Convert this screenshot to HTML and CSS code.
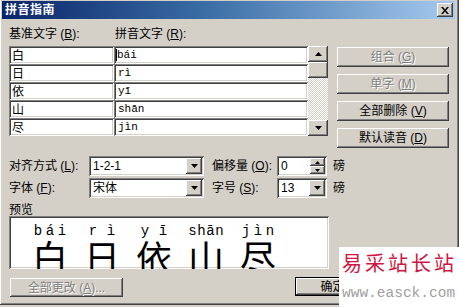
FILE: index.html
```html
<!DOCTYPE html>
<html lang="zh-CN">
<head>
<meta charset="utf-8">
<title>拼音指南</title>
<link rel="stylesheet" href="styles.css">
</head>
<body>
<div class="window">
  <div class="titlebar">
    <span class="title">拼音指南</span>
    <span class="close raised"><svg width="8" height="7" viewBox="0 0 8 7"><path d="M0 0h2l2 2.4 2-2.4h2l-3 3.5 3 3.5h-2l-2-2.4-2 2.4h-2l3-3.5z" fill="#000"/></svg></span>
  </div>
  <div class="body">
    <div class="colheads">
      <span class="lbl head1">基准文字 (<u>B</u>):</span>
      <span class="lbl">拼音文字 (<u>R</u>):</span>
    </div>
    <div class="main">
      <div class="grid">
        <div class="cell">白</div><div class="cell py"><span class="caret"></span>bái</div>
        <div class="cell">日</div><div class="cell py">rì</div>
        <div class="cell">依</div><div class="cell py">yī</div>
        <div class="cell">山</div><div class="cell py">shān</div>
        <div class="cell">尽</div><div class="cell py">jìn</div>
      </div>
      <div class="vscroll">
        <span class="sbtn raised"><svg width="7" height="4" viewBox="0 0 7 4"><path d="M3.5 0L7 4H0z" fill="#000"/></svg></span>
        <span class="thumb raised"></span>
        <span class="track"></span>
        <span class="sbtn raised"><svg width="7" height="4" viewBox="0 0 7 4"><path d="M0 0h7L3.5 4z" fill="#000"/></svg></span>
      </div>
      <div class="btncol">
        <span class="btn raised disabled">组合 (<u>G</u>)</span>
        <span class="btn raised disabled">单字 (<u>M</u>)</span>
        <span class="btn raised">全部删除 (<u>V</u>)</span>
        <span class="btn raised">默认读音 (<u>D</u>)</span>
      </div>
    </div>
    <div class="opts">
      <span class="lbl">对齐方式 (<u>L</u>):</span>
      <div class="combo wide sunken"><span class="val">1-2-1</span><span class="drop raised"><svg width="7" height="4" viewBox="0 0 7 4"><path d="M0 0h7L3.5 4z" fill="#000"/></svg></span></div>
      <span class="lbl">偏移量 (<u>O</u>):</span>
      <div class="combo narrow sunken"><span class="val">0</span><span class="spin"><span class="sb raised"><svg width="5" height="3" viewBox="0 0 5 3"><path d="M2.5 0L5 3H0z" fill="#000"/></svg></span><span class="sb raised"><svg width="5" height="3" viewBox="0 0 5 3"><path d="M0 0h5L2.5 3z" fill="#000"/></svg></span></span></div>
      <span class="unit">磅</span>
      <span class="lbl">字体 (<u>F</u>):</span>
      <div class="combo wide sunken"><span class="val">宋体</span><span class="drop raised"><svg width="7" height="4" viewBox="0 0 7 4"><path d="M0 0h7L3.5 4z" fill="#000"/></svg></span></div>
      <span class="lbl">字号 (<u>S</u>):</span>
      <div class="combo narrow sunken"><span class="val">13</span><span class="drop raised"><svg width="7" height="4" viewBox="0 0 7 4"><path d="M0 0h7L3.5 4z" fill="#000"/></svg></span></div>
      <span class="unit">磅</span>
    </div>
    <div class="plabel">预览</div>
    <div class="preview sunken">
      <div class="rcol"><div class="pys"><span>b</span><span>á</span><span>i</span></div><div class="hz">白</div></div>
      <div class="rcol"><div class="pys"><span>r</span><span>ì</span></div><div class="hz">日</div></div>
      <div class="rcol"><div class="pys"><span>y</span><span>ī</span></div><div class="hz">依</div></div>
      <div class="rcol"><div class="pys"><span>s</span><span>h</span><span>ā</span><span>n</span></div><div class="hz">山</div></div>
      <div class="rcol"><div class="pys"><span>j</span><span>ì</span><span>n</span></div><div class="hz">尽</div></div>
    </div>
    <div class="footer">
      <span class="btn raised disabled allchg">全部更改 (<u>A</u>)...</span>
      <span class="btn raised default ok">确定</span>
    </div>
  </div>
  <div class="watermark">
    <div class="wm-cn">易采站长站</div>
    <div class="wm-url">www.easck.com</div>
  </div>
</div>
</body>
</html>
```

FILE: styles.css
```css
* { box-sizing: border-box; }
html, body { margin: 0; padding: 0; }
body {
  width: 459px;
  height: 307px;
  overflow: hidden;
  background: #d4d0c8;
  font: 12px "Liberation Sans", "Noto Sans CJK SC", sans-serif;
  color: #000;
}
u { text-decoration: underline; text-underline-offset: 1px; }

.window {
  position: relative;
  width: 459px;
  height: 305px;
  padding: 1px 3px 0 2px;
  background: #d4d0c8;
  border-bottom: 1px solid #404040;
  border-right: 1px solid #404040;
  box-shadow: inset 1px 0 #fff, inset -1px -1px #808080;
}

.raised {
  background: #d4d0c8;
  box-shadow: inset -1px -1px #404040, inset 1px 1px #fff, inset -2px -2px #808080, inset 2px 2px #d4d0c8;
}
.sunken {
  background: #fff;
  box-shadow: inset 1px 1px #808080, inset -1px -1px #fff, inset 2px 2px #404040, inset -2px -2px #d4d0c8;
}

.titlebar {
  height: 18px;
  display: flex;
  align-items: center;
  justify-content: space-between;
  background: linear-gradient(to right, #0a246a, #3a6ea5 45%, #a6caf0);
}
.title {
  padding-left: 3px;
  color: #fff;
  font-weight: bold;
  font-size: 12px;
  letter-spacing: 0.5px;
  line-height: 14px;
}
.close {
  width: 16px;
  height: 14px;
  margin-right: 2px;
  display: flex;
  align-items: center;
  justify-content: center;
}

.body { padding-left: 7px; }

.lbl, .unit { line-height: 14px; white-space: nowrap; }

.colheads {
  display: flex;
  height: 14px;
  margin-top: 8px;
}
.head1 { width: 106px; }

.main {
  display: flex;
  align-items: flex-start;
  margin-top: 5px;
}
.grid {
  display: grid;
  grid-template-columns: 105px 194px;
  grid-auto-rows: 18px;
}
.cell {
  background: #fff;
  box-shadow: inset 1px 1px #808080, inset -1px -1px #fff, inset 2px 2px #404040, inset -2px -2px #d4d0c8;
  padding: 2px 0 0 3px;
  line-height: 14px;
  font-size: 12px;
  font-family: "Noto Sans CJK SC", sans-serif;
}
.cell.py {
  font-family: "Liberation Mono", monospace;
  font-size: 11px;
  padding-left: 4px;
  display: flex;
  align-items: center;
  padding-top: 0;
}
.caret {
  display: inline-block;
  width: 1px;
  height: 12px;
  background: #000;
  margin-left: -2px;
}

.vscroll {
  width: 20px;
  height: 90px;
  display: flex;
  flex-direction: column;
}
.sbtn {
  height: 16px;
  display: flex;
  align-items: center;
  justify-content: center;
}
.thumb { height: 16px; }
.track {
  flex: 1;
  background-color: #fff;
  background-image: repeating-conic-gradient(#d4d0c8 0 25%, #fff 0 50%);
  background-size: 2px 2px;
}

.btncol {
  display: flex;
  flex-direction: column;
  gap: 7px;
  margin: 1px 0 0 9px;
}
.btn {
  width: 112px;
  height: 20px;
  display: flex;
  align-items: center;
  justify-content: center;
  line-height: 14px;
  white-space: nowrap;
}
.btn.disabled { color: #808080; text-shadow: 1px 1px #fff; }

.opts {
  display: grid;
  grid-template-columns: 80px 123px 65px 56px auto;
  grid-template-rows: 20px 20px;
  row-gap: 2px;
  align-items: center;
  margin-top: 8px;
}
.combo {
  height: 20px;
  display: flex;
  align-items: center;
  padding: 2px;
}
.combo.wide { width: 115px; }
.combo.narrow { width: 50px; }
.val {
  flex: 1;
  padding-left: 2px;
  line-height: 14px;
}
.drop {
  width: 16px;
  height: 16px;
  display: flex;
  align-items: center;
  justify-content: center;
}
.spin {
  width: 15px;
  height: 16px;
  display: flex;
  flex-direction: column;
}
.sb {
  flex: 1;
  display: flex;
  align-items: center;
  justify-content: center;
}

.plabel {
  height: 13px;
  line-height: 14px;
  margin-top: 5px;
}

.preview {
  width: 320px;
  height: 53px;
  overflow: hidden;
  display: flex;
  padding: 9px 0 0 15px;
}
.rcol {
  width: 52px;
  display: flex;
  flex-direction: column;
  align-items: center;
}
.pys {
  width: 36px;
  height: 12px;
  display: flex;
  justify-content: space-around;
  font-family: "Liberation Mono", monospace;
  font-size: 14px;
  line-height: 12px;
}
.hz {
  margin-top: 1px;
  font-family: "Noto Sans CJK SC", sans-serif;
  font-size: 36px;
  line-height: 36px;
}

.footer {
  display: flex;
  align-items: flex-start;
  margin-top: 8px;
}
.allchg {
  width: 113px;
  height: 19px;
  margin: 1px 0 0 1px;
}
.ok {
  width: 75px;
  height: 19px;
  margin-left: 172px;
}
.btn.default {
  box-shadow: inset 0 0 0 1px #000, inset -2px -2px #404040, inset 2px 2px #fff, inset -3px -3px #808080;
}

.watermark {
  position: absolute;
  left: 339px;
  top: 247px;
  width: 120px;
  height: 60px;
  background: #fff;
  padding: 6px 0 0 3px;
}
.wm-cn {
  font-family: "Noto Sans CJK SC", sans-serif;
  font-size: 20px;
  line-height: 20px;
  letter-spacing: 3px;
  color: #d01540;
  white-space: nowrap;
}
.wm-url {
  margin-top: 12px;
  font-family: "Liberation Mono", monospace;
  font-size: 14.5px;
  line-height: 16px;
  color: #a0a0a0;
  white-space: nowrap;
}
```
